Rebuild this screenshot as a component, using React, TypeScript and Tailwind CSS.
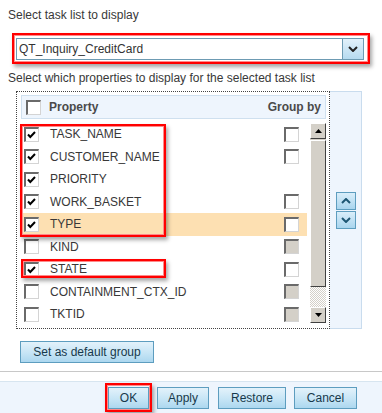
import React from 'react';
import clsx from 'clsx';

type Row = { name: string; checked: boolean; group: 'on' | 'off' | 'none'; active?: boolean };

const rows: Row[] = [
  { name: 'TASK_NAME', checked: true, group: 'on' },
  { name: 'CUSTOMER_NAME', checked: true, group: 'on' },
  { name: 'PRIORITY', checked: true, group: 'none' },
  { name: 'WORK_BASKET', checked: true, group: 'on' },
  { name: 'TYPE', checked: true, group: 'on', active: true },
  { name: 'KIND', checked: false, group: 'off' },
  { name: 'STATE', checked: true, group: 'on' },
  { name: 'CONTAINMENT_CTX_ID', checked: false, group: 'off' },
  { name: 'TKTID', checked: false, group: 'off' },
];

const redBox = 'border-2 border-[#ff0000] shadow-[inset_0_0_0_1px_#ff8a8a,2px_3px_4px_rgba(0,0,0,0.35)]';
const blueBtn =
  'flex items-center justify-center h-[22px] border border-[#5d9dbf] bg-gradient-to-b from-[#e3f2fb] via-[#c9e6f6] to-[#acd7ef] text-[#17394b] text-[12px] leading-none';
const raised = 'border border-t-white border-l-white border-r-[#404040] border-b-[#404040] bg-[#d4d0c8]';

function Check({ checked, disabled }: { checked?: boolean; disabled?: boolean }) {
  return (
    <span
      className={clsx(
        'flex h-[15px] w-[15px] shrink-0 items-start justify-start border-t-2 border-l-2 border-r border-b border-t-[#6a6a6a] border-l-[#6a6a6a] border-r-[#d4d4d4] border-b-[#d4d4d4]',
        disabled ? 'bg-[#d4d0c8]' : 'bg-white'
      )}
    >
      {checked && (
        <svg width="9" height="9" viewBox="0 0 9 9" className="ml-[1px] mt-[2px]">
          <path d="M1 3.5 L3.3 6 L8 1" stroke="#000" strokeWidth="2" fill="none" />
        </svg>
      )}
    </span>
  );
}

function Tri({ up }: { up?: boolean }) {
  return (
    <svg width="7" height="4" viewBox="0 0 7 4">
      <path d={up ? 'M0 4 L3.5 0 L7 4 Z' : 'M0 0 L7 0 L3.5 4 Z'} fill="#000" />
    </svg>
  );
}

function Chevron({ up, color = '#1d5673' }: { up?: boolean; color?: string }) {
  return (
    <svg width="10" height="6" viewBox="0 0 10 6">
      <path d={up ? 'M1 5 L5 1 L9 5' : 'M1 1 L5 5 L9 1'} stroke={color} strokeWidth="2" fill="none" />
    </svg>
  );
}

export default function App() {
  return (
    <div className="relative w-[382px] h-[413px] overflow-hidden bg-white text-[12px] text-[#383838] font-['Liberation_Sans',Arial,sans-serif]">
      <div className="pl-[8px] pt-[8px] leading-[14px]">Select task list to display</div>

      <div className={clsx('ml-[12px] mt-[11px] h-[31px] w-[358px] pl-[2px] pt-[3px]', redBox)}>
        <div className="flex h-[22px] w-[348px] border border-[#6d9bb3] bg-white">
          <div className="flex flex-1 items-center pl-[2px] text-[#333]">QT_Inquiry_CreditCard</div>
          <div className="flex w-[21px] items-center justify-center border-l border-[#6d9bb3] bg-gradient-to-b from-[#e2f1fa] to-[#b6dbf0]">
            <Chevron color="#222" />
          </div>
        </div>
      </div>

      <div className="pl-[8px] mt-[7px] leading-[14px]">Select which properties to display for the selected task list</div>

      <div className="ml-[16px] mt-[6px] flex w-[346px]">
        <div className="relative w-[314px] border border-dotted border-[#444] pt-[3px] pb-[2px]">
          <div className="ml-[4px] mr-[3px] flex h-[24px] items-center border border-[#cfe0ef] bg-[#eef5fd] pl-[4px] pr-[4px] font-bold text-[#4a4a4a]">
            <Check />
            <span className="ml-[8px] flex-1">Property</span>
            <span>Group by</span>
          </div>
          <div className="mt-[4px] flex h-[203px]">
            <div className="ml-[4px] w-[286px]">
              {rows.map((r) => (
                <div
                  key={r.name}
                  className={clsx('flex h-[22.5px] items-center pl-[3px] pr-[8px]', r.active && 'bg-[#fde0b2]')}
                >
                  <Check checked={r.checked} />
                  <span className="ml-[11px] flex-1">{r.name}</span>
                  {r.group === 'none' ? <span className="w-[15px]" /> : <Check disabled={r.group === 'off'} />}
                </div>
              ))}
            </div>
            <div className="ml-[3px] flex h-[200px] w-[16px] flex-col bg-[#d4d0c8]">
              <div className={clsx('flex h-[16px] items-center justify-center', raised)}>
                <Tri up />
              </div>
              <div className={clsx('mt-[1px] h-[147px]', raised)} />
              <div className="flex-1 bg-[repeating-conic-gradient(#d4d0c8_0_25%,#ffffff_0_50%)] bg-[length:2px_2px]" />
              <div className={clsx('flex h-[16px] items-center justify-center', raised)}>
                <Tri />
              </div>
            </div>
          </div>

          <div className={clsx('absolute left-[3px] top-[32px] h-[113px] w-[146px]', redBox)} />
          <div className={clsx('absolute left-[4px] top-[167px] h-[19px] w-[145px]', redBox)} />
        </div>

        <div className="flex w-[32px] flex-col items-center justify-center gap-[1px] border border-l-0 border-[#c9dcee] bg-[#eef5fd]">
          <div className="flex h-[18px] w-[20px] items-center justify-center border border-[#5d9dbf] bg-gradient-to-b from-[#d9eefa] to-[#a9d5ee]">
            <Chevron up />
          </div>
          <div className="flex h-[18px] w-[20px] items-center justify-center border border-[#5d9dbf] bg-gradient-to-b from-[#d9eefa] to-[#a9d5ee]">
            <Chevron />
          </div>
        </div>
      </div>

      <button className={clsx(blueBtn, 'ml-[20px] mt-[12px] w-[134px]')}>Set as default group</button>

      <div className="mt-[8px] h-px bg-[#c8c8c8]" />

      <div className="mt-[9px] flex h-[32px] items-center justify-end border-t border-[#d7e5f0] bg-[#eef5fd] pr-[25px]">
        <div className={clsx('flex h-[29px] w-[47px] items-center justify-center', redBox)}>
          <button className={clsx(blueBtn, 'w-[41px]')}>OK</button>
        </div>
        <button className={clsx(blueBtn, 'ml-[5px] w-[52px]')}>Apply</button>
        <button className={clsx(blueBtn, 'ml-[9px] w-[68px]')}>Restore</button>
        <button className={clsx(blueBtn, 'ml-[8px] w-[63px]')}>Cancel</button>
      </div>
    </div>
  );
}
